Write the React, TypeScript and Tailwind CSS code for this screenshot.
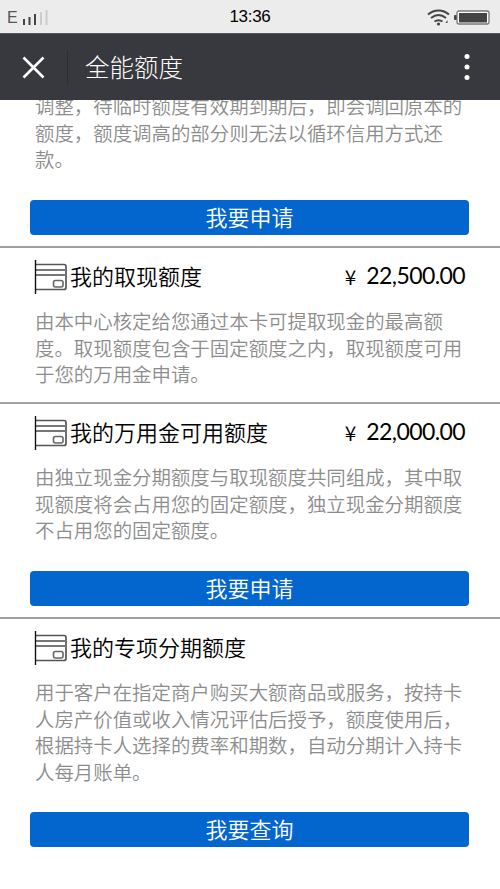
import React from "react";

const cjk = "font-['Noto_Sans_CJK_SC',sans-serif]";

function CardIcon() {
  return (
    <svg width="34" height="36" viewBox="0 0 34 36" fill="none" className="shrink-0">
      <path d="M1.500 5.500H30a2 2 0 0 1 2 2V28.500a2 2 0 0 1-2 2H1.500" stroke="#555" strokeWidth="1.700" />
      <path d="M2 11h30M2 16h30" stroke="#777" strokeWidth="1.800" />
      <rect x="19.500" y="21.500" width="9.500" height="6.500" rx="2" stroke="#666" strokeWidth="1.600" />
      <path d="M1.500 1v34" stroke="#111" strokeWidth="1.400" />
    </svg>
  );
}

function Body({ lines }: { lines: string[] }) {
  return (
    <div className="pl-[35px] text-[19.43px] leading-[26.5px] font-[350] text-[#8c8c8c]">
      {lines.map((line) => (
        <p key={line} className="whitespace-nowrap">{line}</p>
      ))}
    </div>
  );
}

function Action({ label }: { label: string }) {
  return (
    <button className="ml-[30px] flex h-[35px] w-[439px] items-start justify-center rounded-[4px] bg-[#0366ce] text-[22px] leading-[32px] font-[350] text-white">
      {label}
    </button>
  );
}

function Heading({ title, amount }: { title: string; amount?: string }) {
  return (
    <div className="flex h-[36px] items-start pl-[34px] pr-[35px]">
      <CardIcon />
      <h2 className="ml-[2px] text-[22px] leading-[33px] font-[350] text-black">{title}</h2>
      {amount && (
        <div className="ml-auto flex items-start text-black">
          <span className="mr-[10px] text-[21px] leading-[34px] font-[350]">¥</span>
          <span className="font-['Lato',sans-serif] text-[23px] leading-[32px] font-normal tracking-[-0.6px]">{amount}</span>
        </div>
      )}
    </div>
  );
}

export default function App() {
  return (
    <div className={`flex h-[889px] w-[500px] flex-col overflow-hidden bg-white ${cjk}`}>
      <header className="grid h-[33px] shrink-0 grid-cols-3 items-center bg-[#ececec] font-['Liberation_Sans',sans-serif]">
        <div className="flex items-center pl-[7px]">
          <span className="text-[16px] leading-[33px] text-[#555]">E</span>
          <svg width="28" height="16" viewBox="0 0 28 16" className="ml-[4px]">
            <path d="M2 10v6M7.500 8v8M13 5v11" stroke="#444" strokeWidth="2" />
            <path d="M19 3v13M24.500 1v15" stroke="#ccc" strokeWidth="2" />
          </svg>
        </div>
        <span className="text-center text-[17px] leading-[34px] tracking-[-0.3px] text-black">13:36</span>
        <div className="flex items-center justify-end gap-[4px] pr-[10px]">
          <svg width="23" height="17" viewBox="0 0 23 17" fill="none" stroke="#444" strokeWidth="2">
            <path d="M1 5.500C7 0 16 0 22 5.500M4 9c5-4 10-4 15 0M7.500 12.500c3-2 5-2 8 0" />
            <circle cx="11.500" cy="15" r="1.600" fill="#444" stroke="none" />
            <path d="M18.500 14l2-3v3z" fill="#444" stroke="none" />
          </svg>
          <svg width="36" height="15" viewBox="0 0 36 15">
            <rect x="0" y="5" width="3" height="5" rx="1" fill="#444" />
            <rect x="3" y="1" width="32" height="13" rx="2" fill="#fff" stroke="#777" strokeWidth="1.300" />
            <rect x="5" y="3" width="28" height="9.500" fill="#444" />
          </svg>
        </div>
      </header>
      <nav className="flex h-[67px] shrink-0 items-center border-t border-[#55565a] bg-[#38393e] pl-[22px] pr-[29px]">
        <svg width="23" height="23" viewBox="0 0 23 23" stroke="#fff" strokeWidth="2.600">
          <path d="M1.500 1.500l20 20M21.500 1.500l-20 20" />
        </svg>
        <div className="ml-[22px] h-[34px] w-px bg-[#2c2d31]" />
        <h1 className="ml-[17px] text-[24.500px] leading-[36px] font-light text-white">全能额度</h1>
        <svg width="8" height="28" viewBox="0 0 8 28" fill="#fff" className="ml-auto">
          <circle cx="4" cy="3.500" r="2.500" />
          <circle cx="4" cy="14" r="2.500" />
          <circle cx="4" cy="24.500" r="2.500" />
        </svg>
      </nav>
      <main className="flex min-h-0 flex-1 flex-col overflow-hidden">
        <section className="h-[146px] shrink-0">
          <div className="-mt-[7px] mb-[27px]">
            <Body lines={["调整，待临时额度有效期到期后，即会调回原本的", "额度，额度调高的部分则无法以循环信用方式还", "款。"]} />
          </div>
          <Action label="我要申请" />
        </section>
        <section className="h-[156px] shrink-0 border-t-2 border-[#a0a0a0] pt-[11px]">
          <Heading title="我的取现额度" amount="22,500.00" />
          <div className="mt-[13px]">
            <Body lines={["由本中心核定给您通过本卡可提取现金的最高额", "度。取现额度包含于固定额度之内，取现额度可用", "于您的万用金申请。"]} />
          </div>
        </section>
        <section className="h-[215px] shrink-0 border-t-2 border-[#a0a0a0] pt-[11px]">
          <Heading title="我的万用金可用额度" amount="22,000.00" />
          <div className="mt-[13px] mb-[27px]">
            <Body lines={["由独立现金分期额度与取现额度共同组成，其中取", "现额度将会占用您的固定额度，独立现金分期额度", "不占用您的固定额度。"]} />
          </div>
          <Action label="我要申请" />
        </section>
        <section className="shrink-0 border-t-2 border-[#a0a0a0] pt-[11px]">
          <Heading title="我的专项分期额度" />
          <div className="mt-[13px] mb-[27px]">
            <Body lines={["用于客户在指定商户购买大额商品或服务，按持卡", "人房产价值或收入情况评估后授予，额度使用后，", "根据持卡人选择的费率和期数，自动分期计入持卡", "人每月账单。"]} />
          </div>
          <Action label="我要查询" />
        </section>
      </main>
    </div>
  );
}
